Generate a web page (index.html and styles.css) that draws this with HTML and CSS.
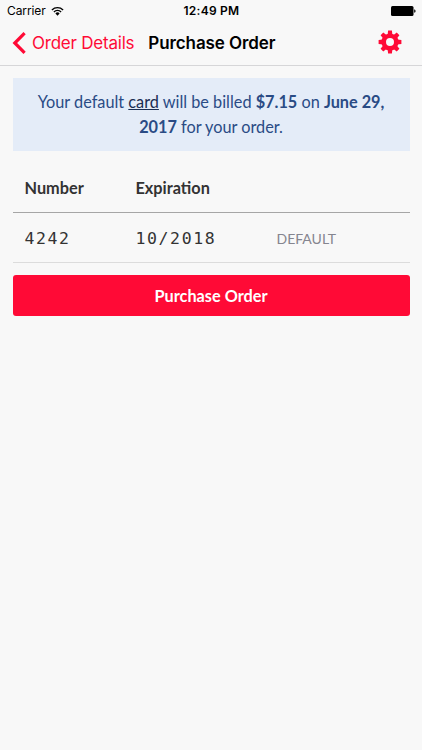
FILE: index.html
```html
<!DOCTYPE html>
<html lang="en">
<head>
    <meta charset="UTF-8">
    <meta name="viewport" content="width=device-width, initial-scale=1.0">
    <title>Purchase Order</title>
    <link rel="stylesheet" href="styles.css">
</head>
<body>
    <header>
        <div class="status-bar">
            <div class="carrier">
                <span class="carrier-name">Carrier</span>
                <svg width="13" height="10" viewBox="0 0 13 10">
                    <path d="M0.9 3.9a8.1 8.1 0 0 1 11.2 0M2.9 6a5.2 5.2 0 0 1 7.2 0" fill="none" stroke="#000" stroke-width="1.4"/>
                    <path d="M4.4 7.4a3 3 0 0 1 4.2 0L6.5 9.7z"/>
                </svg>
            </div>
            <span class="time">12:49 PM</span>
            <div class="battery">
                <svg width="25" height="10" viewBox="0 0 25 10">
                    <rect width="22.5" height="10" rx="1.5"/>
                    <path d="M23.2 3.2q1.4 .4 1.4 1.8t-1.4 1.8z"/>
                </svg>
            </div>
        </div>
        <nav class="nav-bar">
            <a class="back">
                <svg width="14" height="22" viewBox="0 0 14 22">
                    <path d="M12.6 1.2L2.8 11l9.8 9.8" fill="none" stroke="#ff0a36" stroke-width="3.2"/>
                </svg>
                <span class="back-text">Order Details</span>
            </a>
            <h1>Purchase Order</h1>
            <a class="settings">
                <svg width="24" height="24" viewBox="-12 -12 24 24" fill="#ff0a36">
                    <circle r="6.3" fill="none" stroke="#ff0a36" stroke-width="4.6"/>
                    <path d="M-2.4-7L-1.9-11.4H1.9L2.4-7zM-2.4 7L-1.9 11.4H1.9L2.4 7z"/>
                    <path d="M-2.4-7L-1.9-11.4H1.9L2.4-7zM-2.4 7L-1.9 11.4H1.9L2.4 7z" transform="rotate(45)"/>
                    <path d="M-2.4-7L-1.9-11.4H1.9L2.4-7zM-2.4 7L-1.9 11.4H1.9L2.4 7z" transform="rotate(90)"/>
                    <path d="M-2.4-7L-1.9-11.4H1.9L2.4-7zM-2.4 7L-1.9 11.4H1.9L2.4 7z" transform="rotate(135)"/>
                </svg>
            </a>
        </nav>
    </header>

    <main>
        <p class="notice">Your default <a>card</a> will be billed <b>$7.15</b> on <b>June 29,<br>2017</b> for your order.</p>

        <table>
            <tr>
                <th>Number</th>
                <th>Expiration</th>
                <th></th>
            </tr>
            <tr>
                <td class="digits">4242</td>
                <td class="digits">10/2018</td>
                <td class="default">DEFAULT</td>
            </tr>
        </table>

        <button>Purchase Order</button>
    </main>
</body>
</html>
```

FILE: styles.css
```css
* {
    box-sizing: border-box;
}
body {
    margin: 0;
    background-color: #f8f8f8;
    font-family: Lato, sans-serif;
    color: #333;
}
svg {
    display: block;
    flex: none;
}
header {
    height: 66px;
    border-bottom: 1px solid #d6d6d8;
    font-family: Inter, sans-serif;
    color: #000;
}
.status-bar {
    display: grid;
    grid-template-columns: 1fr auto 1fr;
    align-items: center;
    height: 21px;
    padding: 0 6px 0 7px;
    font-size: 12px;
}
.carrier {
    display: flex;
    align-items: center;
    gap: 5px;
}
.carrier-name {
    letter-spacing: -0.1px;
}
.time {
    font-weight: 600;
    letter-spacing: 0.25px;
}
.battery {
    display: flex;
    justify-content: flex-end;
}
.nav-bar {
    display: flex;
    align-items: center;
    height: 44px;
    padding: 0 20px 0 12px;
}
.back {
    display: flex;
    align-items: center;
    gap: 6px;
    color: #ff0a36;
    font-size: 17px;
    letter-spacing: -0.22px;
}
h1 {
    margin: 0 0 0 14px;
    font-size: 17px;
    font-weight: 600;
    letter-spacing: -0.1px;
}
.settings {
    margin-left: auto;
    margin-bottom: 2px;
}
main {
    padding: 12px 12.5px;
}
.notice {
    margin: 0;
    padding: 12px 10px;
    background-color: #e4ecf8;
    color: #2a4b85;
    font-size: 16.27px;
    line-height: 24.5px;
    text-align: center;
}
.notice a {
    color: #1a2e52;
    text-decoration: underline;
}
table {
    width: 100%;
    margin-bottom: 12px;
    border-collapse: collapse;
    table-layout: fixed;
}
th, td {
    padding: 0 12px;
    text-align: left;
}
th {
    height: 61px;
    padding-top: 13px;
    border-bottom: 1px solid #a6a6a6;
    font-size: 16.3px;
    font-weight: 700;
}
td {
    height: 50px;
    padding-top: 2px;
    border-bottom: 1px solid #dcdcdc;
}
/* Set column widths */
th:nth-child(1) {
    width: 111px;
}
th:nth-child(2) {
    width: 141px;
}
.digits {
    font-family: "DejaVu Sans Mono", monospace;
    font-size: 16.5px;
    letter-spacing: 1.6px;
}
.default {
    color: #85858f;
    font-size: 14px;
}
button {
    display: block;
    width: 100%;
    height: 41px;
    border: none;
    border-radius: 3px;
    background-color: #ff0a36;
    color: white;
    font-family: Lato, sans-serif;
    font-size: 16.3px;
    font-weight: 700;
}
```
